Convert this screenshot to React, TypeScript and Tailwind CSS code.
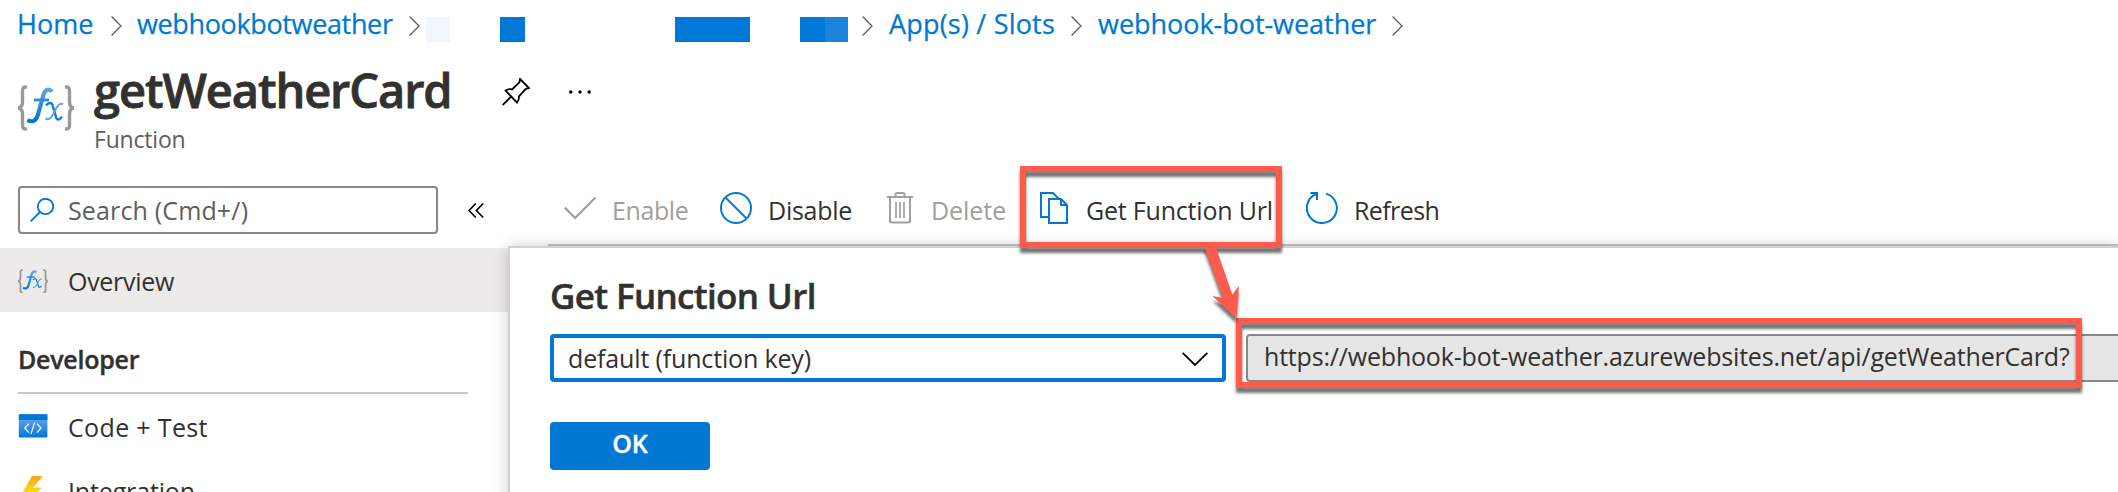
import React from "react";

function Crumb({ className, children }: { className: string; children: React.ReactNode }) {
  return (
    <a className={`shrink-0 whitespace-nowrap text-[27px] leading-[47px] text-[#0078d4] [-webkit-text-stroke:0.25px_#0078d4] ${className}`}>{children}</a>
  );
}

function CrumbChevron({ className = "" }: { className?: string }) {
  return (
    <svg viewBox="0 0 11 20" className={`mt-[5px] h-5 w-[11px] shrink-0 ${className}`} fill="none" stroke="#605e5c" strokeWidth="1.3">
      <path d="M0.6 0.5 L10 10 L0.6 19.5" />
    </svg>
  );
}

function FxIcon({ className }: { className: string }) {
  return (
    <svg viewBox="0 0 56 46" className={className} fill="none">
      <defs>
        <linearGradient id="fx" x1="0" y1="0" x2="0" y2="1">
          <stop offset="0" stopColor="#5ea0ef" />
          <stop offset="1" stopColor="#0078d4" />
        </linearGradient>
      </defs>
      <g stroke="#999" strokeWidth="3.4">
        <path d="M9 2 C5.5 1.6 4.5 3 4.5 6 V17 C4.5 20.5 3 22.6 0 23 C3 23.4 4.5 25.5 4.5 29 V40 C4.5 43 5.5 44.4 9 44" />
        <path d="M47 2 C50.5 1.6 51.5 3 51.5 6 V17 C51.5 20.5 53 22.6 56 23 C53 23.4 51.5 25.5 51.5 29 V40 C51.5 43 50.5 44.4 47 44" />
      </g>
      <path d="M34.2 6.6 C30 2.6 27 5 25.4 10 L19.8 30 C18 36.5 14 37.5 9.4 35" stroke="url(#fx)" strokeWidth="4.2" />
      <path d="M16 15 H31" stroke="#2f8ae4" strokeWidth="2.8" />
      <path d="M28 20.4 C31 17 33.8 17.2 34.8 21 L37.8 31.4 C38.8 35.6 41.4 35.4 44 31.6" stroke="#0f80d9" strokeWidth="2.4" />
      <path d="M45 19.4 C41.2 16.6 38.8 22.4 36.6 26.4 C34 31 31.6 36.6 27.6 33.4" stroke="#5ea0ef" strokeWidth="2" />
    </svg>
  );
}

function CodeIcon() {
  return (
    <svg viewBox="0 0 30 24" className="h-6 w-[30px] shrink-0" fill="none">
      <defs>
        <linearGradient id="code" x1="0" y1="0" x2="0" y2="1">
          <stop offset="0.2" stopColor="#5ea0ef" />
          <stop offset="1" stopColor="#0078d4" />
        </linearGradient>
      </defs>
      <rect x="0.8" y="0.3" width="28.6" height="23.2" rx="1" fill="url(#code)" />
      <path d="M0.8 6 V1.3 A1 1 0 0 1 1.8 0.3 H28.4 A1 1 0 0 1 29.4 1.3 V6 Z" fill="#0078d4" />
      <path d="M10.8 9.8 L6.8 14 L10.8 18.6 M19 9.8 L23 14 L19 18.6 M16.6 8.4 L13 20" stroke="#f2f2f2" strokeWidth="1.3" />
    </svg>
  );
}

function BoltIcon() {
  return (
    <svg viewBox="0 0 30 32" className="h-8 w-[30px] shrink-0">
      <defs>
        <linearGradient id="bolt" x1="0" y1="0" x2="0" y2="1">
          <stop offset="0" stopColor="#fea11b" />
          <stop offset="0.5" stopColor="#ffd70f" />
          <stop offset="1" stopColor="#fea11b" />
        </linearGradient>
      </defs>
      <path d="M14 2 H23.6 Q25 2 24 3.3 L15 13.6 H24 L8 31 L12 18.4 H5.8 Q4.6 18.4 5.2 17.2 Z" fill="url(#bolt)" />
    </svg>
  );
}

function NavItem({ icon, label, className = "" }: { icon: React.ReactNode; label: string; className?: string }) {
  return (
    <div className={`flex h-16 items-center pl-[18px] ${className}`}>
      <div className="w-[50px] shrink-0">{icon}</div>
      <span className="pt-[2px] text-[25px] leading-8 text-[#323130]">{label}</span>
    </div>
  );
}

function Command({
  icon,
  label,
  className,
  labelClass,
}: {
  icon: React.ReactNode;
  label: string;
  className: string;
  labelClass: string;
}) {
  return (
    <div className={`flex h-[66px] shrink-0 ${className}`}>
      <div className="mt-[14px] w-12 shrink-0">{icon}</div>
      <span className={`mt-4 whitespace-nowrap text-[25px] leading-8 ${labelClass}`}>{label}</span>
    </div>
  );
}

function Header() {
  return (
    <header className="flex pl-[18px]">
      <FxIcon className="mt-[38px] h-[46px] w-14 shrink-0" />
      <div className="ml-5 w-[408px] shrink-0 pt-[13px]">
        <h1 className="text-[47px] font-semibold leading-[60px] tracking-[-1.1px] text-[#323130] [-webkit-text-stroke:0.8px_#323130]">
          getWeatherCard
        </h1>
        <p className="mt-1 text-[23px] leading-[30px] tracking-[-0.2px] text-[#605e5c]">Function</p>
      </div>
      <svg viewBox="0 0 28 28" className="mt-[31px] h-7 w-7 shrink-0" fill="none" stroke="#000" strokeWidth="1.8">
        <path d="M0.6 27.2 L9.6 18" />
        <path d="M18 1 L27 10 L23.8 10.8 L17 18.4 Q17.2 21.6 15 24.6 L3.6 12.6 Q6.6 10.4 10 11.4 L17.4 4.4 Z" />
      </svg>
      <svg viewBox="0 0 22 4" className="mt-[43px] ml-[39px] h-1 w-[22px] shrink-0">
        <circle cx="1.8" cy="2" r="1.7" />
        <circle cx="11" cy="2" r="1.7" />
        <circle cx="20.2" cy="2" r="1.7" />
      </svg>
    </header>
  );
}

function Sidebar() {
  return (
    <aside className="w-[508px] shrink-0">
      <div className="flex items-center pt-[14px] pl-[18px]">
        <div className="flex h-12 w-[420px] items-center rounded-[4px] border-2 border-[#8a8886] pl-[10px]">
          <svg viewBox="0 0 24 24" className="h-6 w-6 shrink-0" fill="none" stroke="#0078d4" strokeWidth="1.8">
            <circle cx="15.5" cy="8.5" r="7.7" />
            <path d="M10 14 L0.6 23.4" />
          </svg>
          <span className="ml-[14px] pb-px text-[25px] leading-8 tracking-[0.15px] text-[#605e5c]">Search (Cmd+/)</span>
        </div>
        <svg viewBox="0 0 16 15" className="ml-[30px] h-[15px] w-4" fill="none" stroke="#000" strokeWidth="1.6">
          <path d="M7.8 0.5 L1 7.5 L7.8 14.5 M15.2 0.5 L8.4 7.5 L15.2 14.5" />
        </svg>
      </div>
      <NavItem
        className="mt-[14px] bg-[#edebe9] tracking-[-0.3px]"
        label="Overview"
        icon={<FxIcon className="mt-[2px] h-[24.6px] w-[30px]" />}
      />
      <div className="ml-[18px] mr-10 h-[82px] border-b-2 border-[#c8c8c8] pt-[30px]">
        <h2 className="text-[25px] font-semibold leading-[34px] tracking-[-0.25px] text-[#323130] [-webkit-text-stroke:0.4px_#323130]">
          Developer
        </h2>
      </div>
      <NavItem className="tracking-[0.35px]" label="Code + Test" icon={<CodeIcon />} />
      <NavItem className="tracking-[-0.15px]" label="Integration" icon={<BoltIcon />} />
    </aside>
  );
}

function CommandBar() {
  return (
    <div className="ml-10 flex h-[74px] border-b-2 border-[#c8c8c8] pt-[6px] pl-4">
      <Command
        className="w-[156px]"
        labelClass="text-[#a19f9d] tracking-[-0.4px]"
        label="Enable"
        icon={
          <svg viewBox="0 0 32 32" className="h-8 w-8" fill="none" stroke="#a19f9d" strokeWidth="2.2">
            <path d="M0.8 15.6 L11.2 26 L31.4 5.6" />
          </svg>
        }
      />
      <Command
        className="w-[163px]"
        labelClass="text-[#323130] tracking-[-0.25px]"
        label="Disable"
        icon={
          <svg viewBox="0 0 32 32" className="h-8 w-8" fill="none" stroke="#0078d4" strokeWidth="2">
            <circle cx="16" cy="16" r="15" />
            <path d="M5.5 5.5 L26.5 26.5" />
          </svg>
        }
      />
      <Command
        className="w-[155px]"
        labelClass="text-[#a19f9d] tracking-[-0.05px]"
        label="Delete"
        icon={
          <svg viewBox="0 0 32 32" className="h-8 w-8" fill="none" stroke="#a19f9d" strokeWidth="2">
            <path d="M4 5 H30" />
            <path d="M12.5 5 V2.5 Q12.5 1 14 1 H20 Q21.5 1 21.5 2.5 V5" />
            <path d="M7 5 V28.5 Q7 30.5 9 30.5 H25 Q27 30.5 27 28.5 V5" />
            <path d="M13 10 V26 M17 10 V26 M21 10 V26" strokeWidth="1.7" />
          </svg>
        }
      />
      <Command
        className="w-[268px] pl-[2px]"
        labelClass="text-[#323130] tracking-[-0.2px] -ml-[2px]"
        label="Get Function Url"
        icon={
          <svg viewBox="0 0 32 32" className="h-8 w-8" fill="none" stroke="#0078d4" strokeWidth="2">
            <path d="M9 25 H1 V1 H13 L19 7" />
            <path d="M9 7 H21 L27 13 V31 H9 Z" />
            <path d="M21 7 V13 H27" />
          </svg>
        }
      />
      <Command
        className="w-[160px]"
        labelClass="text-[#323130] tracking-[-0.6px]"
        label="Refresh"
        icon={
          <svg viewBox="0 0 32 32" className="h-8 w-8" fill="none" stroke="#0078d4" strokeWidth="2">
            <path d="M20 1.6 A15 15 0 1 1 10 2.2" />
            <path d="M4.4 1 H11 V8" />
          </svg>
        }
      />
    </div>
  );
}

function UrlPanel() {
  return (
    <section className="relative h-[260px] border-t-2 border-l-2 border-[#d2d2d2] bg-white pl-10 shadow-[0_0_14px_rgba(0,0,0,0.2)]">
      <h2 className="pt-[25px] text-[35px] font-semibold leading-[46px] tracking-[-0.65px] text-[#323130] [-webkit-text-stroke:0.5px_#323130]">
        Get Function Url
      </h2>
      <div className="mt-[15px] flex">
        <div className="flex h-12 w-[676px] shrink-0 items-center justify-between rounded-[4px] border-4 border-[#0078d4] pr-[14px] pl-[14px]">
          <span className="pb-[1px] text-[25px] leading-8 tracking-[-0.15px] text-[#323130]">default (function key)</span>
          <svg viewBox="0 0 26 14" className="mt-px h-[14px] w-[26px]" fill="none" stroke="#000" strokeWidth="1.8">
            <path d="M0.6 0.8 L13 13 L25.4 0.8" />
          </svg>
        </div>
        <div className="ml-5 flex h-12 w-[900px] shrink-0 items-center rounded-l-[4px] border-2 border-[#8a8886] bg-[#e6e6e6] pl-4">
          <span className="whitespace-nowrap pb-[4px] text-[25px] leading-8 tracking-[-0.19px] text-[#323130]">
            https://webhook-bot-weather.azurewebsites.net/api/getWeatherCard?
          </span>
        </div>
      </div>
      <button className="mt-10 flex h-12 w-40 items-center justify-center rounded-[4px] bg-[#0078d4] pb-[6px] text-[25px] font-semibold leading-8 text-white [-webkit-text-stroke:0.4px_#fff]">
        OK
      </button>
    </section>
  );
}

function Annotations() {
  return (
    <svg viewBox="0 0 2118 492" className="pointer-events-none absolute inset-0 h-[492px] w-[2118px]" fill="none">
      <defs>
        <filter id="drop" x="0" y="0" width="2118" height="492" filterUnits="userSpaceOnUse" colorInterpolationFilters="sRGB">
          <feDropShadow dx="0" dy="5" stdDeviation="1.6" floodColor="#000" floodOpacity="0.55" />
        </filter>
      </defs>
      <g filter="url(#drop)">
        <rect x="1023" y="169" width="256" height="76" stroke="#ff5a4c" strokeWidth="6" />
      </g>
      <g filter="url(#drop)">
        <rect x="1239" y="321" width="840" height="64" stroke="#ff5a4c" strokeWidth="6" />
      </g>
      <g filter="url(#drop)">
        <path d="M1204 246 L1214 242 L1232.3 294.5 L1239 286 L1236.3 318.5 L1212.4 296 L1223 298 Z" fill="#ff5a4c" />
      </g>
      <path d="M1203 242 H1216 V248 H1203 Z" fill="#ff5a4c" />
    </svg>
  );
}

export default function App() {
  return (
    <div className="relative h-[492px] w-[2118px] overflow-hidden bg-white font-['Open_Sans',sans-serif]">
      <nav className="flex h-[47px] items-center pl-[17px]">
        <Crumb className="w-[94px]">Home</Crumb>
        <CrumbChevron />
        <Crumb className="ml-[15px] w-[272px] tracking-[-0.36px]">webhookbotweather</Crumb>
        <CrumbChevron />
        <div className="mt-3 ml-[6px] h-[25px] w-6 shrink-0 bg-[#f2f7ff]" />
        <div className="mt-3 ml-[50px] h-[25px] w-[25px] shrink-0 bg-[#0078d7]" />
        <div className="mt-3 ml-[150px] h-[25px] w-[75px] shrink-0 bg-[#0078d7]" />
        <div className="mt-3 ml-[50px] h-[25px] w-[25px] shrink-0 bg-[#0078d7]" />
        <div className="mt-3 h-[25px] w-[23px] shrink-0 bg-[#1a84db]" />
        <CrumbChevron className="ml-[14px]" />
        <Crumb className="ml-4 w-[182px] tracking-[0.2px]">App(s) / Slots</Crumb>
        <CrumbChevron />
        <Crumb className="ml-4 w-[294px] tracking-[-0.04px]">webhook-bot-weather</Crumb>
        <CrumbChevron />
      </nav>
      <div className="h-[125px]">
        <Header />
      </div>
      <div className="flex">
        <Sidebar />
        <main className="w-[1610px] shrink-0">
          <CommandBar />
          <UrlPanel />
        </main>
      </div>
      <Annotations />
    </div>
  );
}
